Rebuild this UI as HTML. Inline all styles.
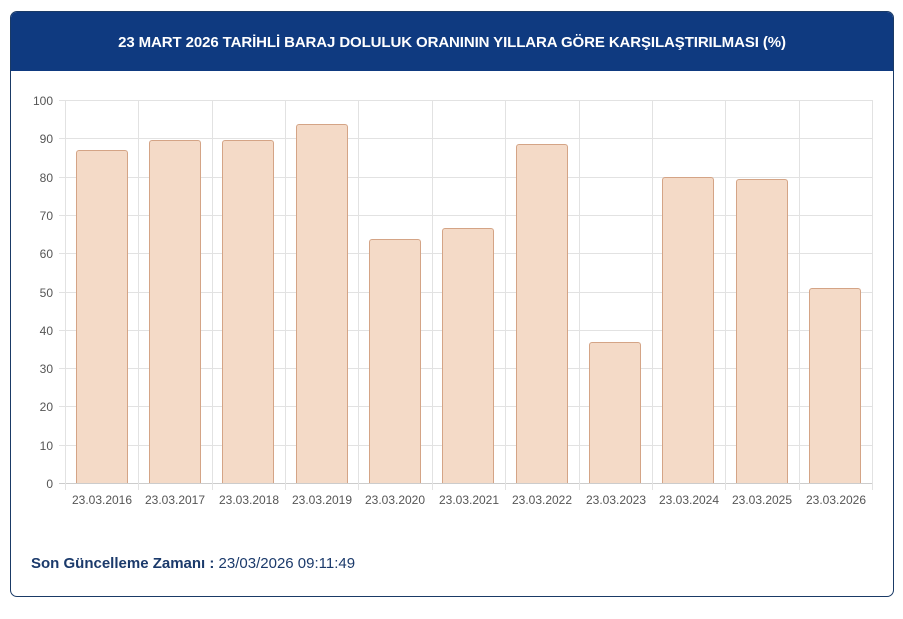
<!DOCTYPE html>
<html><head><meta charset="utf-8"><style>
*{margin:0;padding:0;box-sizing:border-box}
body{width:903px;height:619px;background:#fff;font-family:"Liberation Sans",sans-serif;position:relative;overflow:hidden}
.card{position:absolute;left:10px;top:11px;width:884px;height:586px;border:1px solid #1a3a66;border-radius:7px;overflow:hidden;background:#fff}
.hdr{position:absolute;left:0;top:0;width:100%;height:59px;background:#0f3a80;color:#fff;font-weight:bold;font-size:15px;text-align:center;line-height:62px;letter-spacing:-0.1px}
.g{position:absolute;background:#e2e2e2}
.yl{position:absolute;width:30px;text-align:right;font-size:12px;color:#555;left:23px}
.bar{position:absolute;background:#f4dac7;border:1px solid #d4a486;border-bottom:none;border-radius:3px 3px 0 0;width:52px}
.xl{position:absolute;font-size:12px;color:#555;width:74px;text-align:center;top:493px}
.ft{position:absolute;left:31px;top:555px;font-size:15px;color:#1b3a6b}
</style></head><body>
<div class="card"><div class="hdr">23 MART 2026 TARİHLİ BARAJ DOLULUK ORANININ YILLARA GÖRE KARŞILAŞTIRILMASI (%)</div></div>
<div id="c"></div>
<div class="ft"><b>Son Güncelleme Zamanı :</b> 23/03/2026 09:11:49</div>
<script>
(function(){
var c=document.getElementById('c'),h='';
var L=65,R=872,T=100,B=483,cw=(R-L)/11;
for(var i=0;i<=10;i++){var y=B-(B-T)*i/10;h+='<div class="g" style="left:'+(L-6)+'px;top:'+Math.round(y)+'px;width:'+(R-L+6)+'px;height:1px;'+(i==0?'background:#ccc':'')+'"></div>';
h+='<div class="yl" style="top:'+(Math.round(y)-6)+'px">'+(i*10)+'</div>';}
for(var i=0;i<=11;i++){var x=Math.round(L+cw*i);h+='<div class="g" style="left:'+x+'px;top:'+T+'px;width:1px;height:'+(B-T+7)+'px"></div>';}
var v=[87,89.5,89.5,93.8,63.8,66.7,88.4,36.9,79.9,79.5,50.9];
var d=['2016','2017','2018','2019','2020','2021','2022','2023','2024','2025','2026'];
for(var i=0;i<11;i++){var x=Math.round(L+cw*i+10.5);var bt=Math.round(B-(B-T)*v[i]/100);
h+='<div class="bar" style="left:'+x+'px;top:'+bt+'px;height:'+(B-bt)+'px"></div>';
h+='<div class="xl" style="left:'+Math.round(L+cw*i)+'px">23.03.'+d[i]+'</div>';}
c.innerHTML=h;
})();
</script>
</body></html>
